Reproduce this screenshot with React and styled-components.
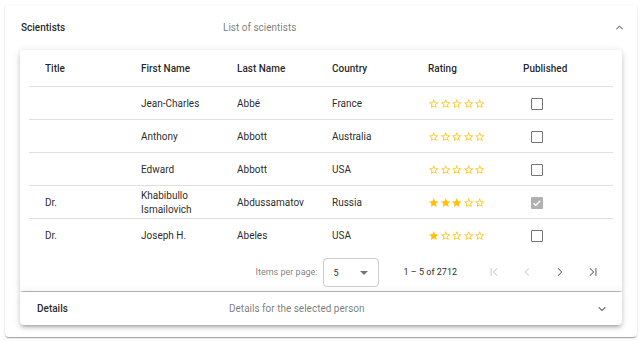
import React from "react";
import styled, { createGlobalStyle } from "styled-components";
import { ChevronUp, ChevronDown, ChevronLeft, ChevronRight, ChevronFirst, ChevronLast } from "lucide-react";
import { MdStar, MdStarBorder } from "react-icons/md";

const Global = createGlobalStyle`
  html, body { margin: 0; padding: 0; background: #fff; }
  body { font-family: Roboto, "Liberation Sans", Arial, sans-serif; color: rgba(0,0,0,.87); }
  * { box-sizing: border-box; }
`;

const Page = styled.div`
  width: 643px;
  height: 341px;
  padding: 5px 6px 4px 5px;
  overflow: hidden;
`;

const OuterPanel = styled.section`
  background: #fff;
  border-radius: 4px;
  box-shadow: 0 2px 1px -1px rgba(0,0,0,.2), 0 1px 1px 0 rgba(0,0,0,.14), 0 1px 3px 0 rgba(0,0,0,.12);
  padding: 0 15px 12px 15px;
  height: 332px;
  display: flex;
  flex-direction: column;
`;

const PanelHeader = styled.header`
  display: flex;
  align-items: center;
  height: ${(p) => p.$h}px;
  padding: 0 ${(p) => p.$pr}px 0 ${(p) => p.$pl}px;
  font-size: 10px;
`;

const PanelTitle = styled.div`
  flex: 0 0 ${(p) => p.$w}px;
  font-weight: 500;
  color: rgba(0,0,0,.87);
`;

const PanelDesc = styled.div`
  flex: 1;
  color: rgba(0,0,0,.54);
`;

const Chevron = styled.span`
  display: flex;
  color: rgba(0,0,0,.54);
  margin-right: ${(p) => p.$mr || 0}px;
`;

const Card = styled.div`
  background: #fff;
  border-radius: ${(p) => p.$radius};
  box-shadow: 0 3px 3px -2px rgba(0,0,0,.2), 0 3px 4px 0 rgba(0,0,0,.14), 0 1px 8px 0 rgba(0,0,0,.12);
`;

const TableCard = styled(Card)`
  padding: 0 9px;
  height: 241px;
  display: flex;
  flex-direction: column;
`;

const Row = styled.div`
  display: grid;
  grid-template-columns: 96px 96px 95px 96px 95px 1fr;
  align-items: center;
  height: ${(p) => p.$h}px;
  padding-top: 1px;
  border-bottom: ${(p) => (p.$line ? "1px solid rgba(0,0,0,.12)" : "none")};
  font-size: 10px;
  font-weight: ${(p) => (p.$head ? 500 : 400)};
`;

const Cell = styled.div`
  padding-left: 16px;
  padding-right: 8px;
  line-height: 14px;
`;

const Stars = styled.div`
  display: flex;
  color: #ffc107;
  font-size: 11.5px;
  padding-left: 16px;
`;

const Box = styled.div`
  width: 12px;
  height: 12px;
  margin-left: 8px;
  border-radius: 1px;
  border: ${(p) => (p.$checked ? "none" : "1.5px solid rgba(0,0,0,.54)")};
  background: ${(p) => (p.$checked ? "#b0b0b0" : "transparent")};
  display: flex;
  align-items: center;
  justify-content: center;
`;

const Paginator = styled.div`
  display: flex;
  align-items: center;
  justify-content: flex-end;
  height: 39px;
  font-size: 9px;
  color: rgba(0,0,0,.54);
  padding-right: 4px;
`;

const PageLabel = styled.span`
  margin-right: 5px;
`;

const Select = styled.div`
  width: 56px;
  height: 29px;
  border: 1px solid rgba(0,0,0,.2);
  border-radius: 4px;
  display: flex;
  align-items: center;
  justify-content: space-between;
  padding: 0 10px 0 10px;
  color: rgba(0,0,0,.87);
  font-size: 9px;
  margin-right: 25px;
  margin-top: 2px;
`;

const Caret = styled.span`
  width: 0;
  height: 0;
  border-left: 4px solid transparent;
  border-right: 4px solid transparent;
  border-top: 4px solid rgba(0,0,0,.54);
`;

const Range = styled.span`
  color: rgba(0,0,0,.87);
  margin-right: 20px;
`;

const NavBtn = styled.span`
  width: 33px;
  display: flex;
  justify-content: center;
  color: ${(p) => (p.$disabled ? "rgba(0,0,0,.2)" : "rgba(0,0,0,.6)")};
`;

const DetailsCard = styled(Card)`
  margin-top: 1px;
`;

const rows = [
  { t: "", f: "Jean-Charles", l: "Abbé", c: "France", r: 0, p: false },
  { t: "", f: "Anthony", l: "Abbott", c: "Australia", r: 0, p: false },
  { t: "", f: "Edward", l: "Abbott", c: "USA", r: 0, p: false },
  { t: "Dr.", f: "Khabibullo Ismailovich", l: "Abdussamatov", c: "Russia", r: 3, p: true },
  { t: "Dr.", f: "Joseph H.", l: "Abeles", c: "USA", r: 1, p: false },
];

function Rating({ n }) {
  return (
    <Stars>
      {[0, 1, 2, 3, 4].map((i) => (i < n ? <MdStar key={i} /> : <MdStarBorder key={i} />))}
    </Stars>
  );
}

export default function App() {
  return (
    <>
      <Global />
      <Page>
        <OuterPanel>
          <PanelHeader $h={45} $pl={1} $pr={0}>
            <PanelTitle $w={202}>Scientists</PanelTitle>
            <PanelDesc>List of scientists</PanelDesc>
            <Chevron $mr={-3}><ChevronUp size={11} strokeWidth={2.2} /></Chevron>
          </PanelHeader>
          <TableCard $radius="4px 4px 0 0">
            <Row $h={37} $line $head>
              <Cell>Title</Cell>
              <Cell>First Name</Cell>
              <Cell>Last Name</Cell>
              <Cell>Country</Cell>
              <Cell>Rating</Cell>
              <Cell>Published</Cell>
            </Row>
            {rows.map((r, i) => (
              <Row key={i} $h={33} $line={i < rows.length - 1}>
                <Cell>{r.t}</Cell>
                <Cell>{r.f}</Cell>
                <Cell>{r.l}</Cell>
                <Cell>{r.c}</Cell>
                <Rating n={r.r} />
                <Cell>
                  <Box $checked={r.p}>
                    {r.p && (
                      <svg width="10" height="10" viewBox="0 0 24 24">
                        <path d="M4 12.5l5 5L20 6.5" fill="none" stroke="#fff" strokeWidth="3" />
                      </svg>
                    )}
                  </Box>
                </Cell>
              </Row>
            ))}
            <Paginator>
              <PageLabel>Items per page:</PageLabel>
              <Select>
                <span>5</span>
                <Caret />
              </Select>
              <Range>1 – 5 of 2712</Range>
              <NavBtn $disabled><ChevronFirst size={14} strokeWidth={1.8} /></NavBtn>
              <NavBtn $disabled><ChevronLeft size={14} strokeWidth={1.8} /></NavBtn>
              <NavBtn><ChevronRight size={14} strokeWidth={1.8} /></NavBtn>
              <NavBtn><ChevronLast size={14} strokeWidth={1.8} /></NavBtn>
            </Paginator>
          </TableCard>
          <DetailsCard $radius="0 0 4px 4px">
            <PanelHeader $h={33} $pl={17} $pr={14}>
              <PanelTitle $w={192}>Details</PanelTitle>
              <PanelDesc>Details for the selected person</PanelDesc>
              <Chevron><ChevronDown size={12} strokeWidth={2.2} /></Chevron>
            </PanelHeader>
          </DetailsCard>
        </OuterPanel>
      </Page>
    </>
  );
}
